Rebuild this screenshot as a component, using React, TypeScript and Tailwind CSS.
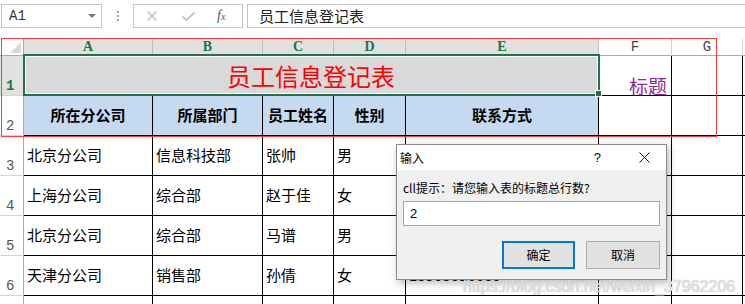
import React from "react";

const HEADS = ["所在分公司", "所属部门", "员工姓名", "性别", "联系方式"];
// E3–E5 sit fully under the dialog, so only E6 is given a value
const DATA = [
  ["北京分公司", "信息科技部", "张帅", "男", ""],
  ["上海分公司", "综合部", "赵于佳", "女", ""],
  ["北京分公司", "综合部", "马谱", "男", ""],
  ["天津分公司", "销售部", "孙倩", "女", "13903016680"],
  ["", "", "", "", ""],
];

function RowHead({ n }: { n?: number }) {
  return (
    <div className="flex items-end border-r border-b border-r-[#ababab] border-b-[#d4d4d4] bg-white pb-[1px] pl-[6px] font-['Liberation_Mono',monospace] text-[14px] leading-[16px] text-[#555]">
      {n}
    </div>
  );
}

function FormulaBar() {
  return (
    <div className="flex h-[39px] items-start pt-[4px]">
      {/* Name box */}
      <div className="ml-px flex h-[24px] w-[101px] items-center justify-between border border-[#c6c6c6] pl-[7px] pr-[5px]">
        <span className="font-['Liberation_Mono',monospace] text-[14px] text-[#333]">A1</span>
        <svg width="8" height="4" viewBox="0 0 8 4">
          <path d="M0 0H8L4 4Z" fill="#777" />
        </svg>
      </div>

      {/* Grip dots */}
      <div className="flex h-[24px] w-[31px] flex-col items-center justify-center gap-[2px]">
        <span className="h-[2px] w-[2px] bg-[#a0a0a0]" />
        <span className="h-[2px] w-[2px] bg-[#a0a0a0]" />
        <span className="h-[2px] w-[2px] bg-[#a0a0a0]" />
      </div>

      {/* Cancel / enter / fx */}
      <div className="flex h-[24px] w-[110px] items-center border border-[#c6c6c6] pl-[13px]">
        <svg width="10" height="10" viewBox="0 0 10 10">
          <path d="M0.5 0.5L9.5 9.5M9.5 0.5L0.5 9.5" stroke="#bdbdbd" strokeWidth="1.3" />
        </svg>
        <svg className="ml-[25px]" width="13" height="9" viewBox="0 0 13 9">
          <path d="M0.5 4.5L4.5 8L12.5 0.5" stroke="#bdbdbd" strokeWidth="1.6" fill="none" />
        </svg>
        <span className="ml-[22px] font-['Liberation_Serif',serif] text-[14px] italic leading-none text-[#555]">
          f<span className="text-[10px]">x</span>
        </span>
      </div>

      {/* Formula input */}
      <div className="ml-[4px] flex h-[24px] flex-1 items-center border-y border-l border-[#c6c6c6] pl-[11px] font-['Noto_Sans_CJK_SC',sans-serif] text-[15px] text-[#222]">
        员工信息登记表
      </div>
    </div>
  );
}

function Sheet() {
  const cjk = "font-['Noto_Sans_CJK_SC',sans-serif]";
  const cell = "border-r border-b border-black";
  return (
    <div className="grid grid-cols-[24px_129px_110px_71px_72px_193px_73px_71px_1fr] grid-rows-[17px_40px_40px_40px_40px_40px_40px_40px]">
      {/* Column headers */}
      <div className="relative border-r border-b border-r-[#ababab] border-b-[#ababab] bg-white">
        <svg className="absolute right-[2px] bottom-[2px]" width="11" height="11" viewBox="0 0 11 11">
          <path d="M11 0V11H0Z" fill="#dadada" />
        </svg>
      </div>
      {["A", "B", "C", "D", "E"].map((c) => (
        <div
          key={c}
          className="flex items-center justify-center border-r border-b border-r-[#c0c0c0] border-b-[#ababab] bg-[#e1e1e1] font-['Liberation_Serif',serif] text-[14px] font-bold leading-none text-[#217346]"
        >
          {c}
        </div>
      ))}
      {["F", "G"].map((c) => (
        <div
          key={c}
          className="flex items-center justify-center border-r border-b border-r-[#d4d4d4] border-b-[#ababab] bg-white font-['Liberation_Mono',monospace] text-[14px] leading-none text-[#444]"
        >
          {c}
        </div>
      ))}
      <div className="border-b border-[#ababab] bg-white" />

      {/* Row 1 */}
      <div className="flex items-end border-r border-b border-r-[#ababab] border-b-[#d4d4d4] bg-[#e1e1e1] pb-[1px] pl-[6px] font-['Liberation_Mono',monospace] text-[14px] font-bold leading-[16px] text-[#217346]">
        1
      </div>
      <div className={`relative col-span-5 flex items-center justify-center bg-[#d9d9d9] ${cell} ${cjk} text-[24px] leading-none text-[#ff0000]`}>
        员工信息登记表
        <div className="pointer-events-none absolute -top-[2px] -left-[1px] -right-[2px] -bottom-px border-2 border-[#217346] shadow-[inset_0_0_0_1px_#fff]" />
        <div className="absolute -right-[4px] -bottom-[2px] h-[7px] w-[7px] border border-white bg-[#217346]" />
      </div>
      <div className={`flex items-end justify-end pr-[4px] ${cell} ${cjk} text-[19px] leading-none text-[#8c2b9a]`}>
        标题
      </div>
      <div className={cell} />
      <div className="border-b border-black" />

      {/* Row 2 */}
      <RowHead n={2} />
      {HEADS.map((h) => (
        <div key={h} className={`flex items-center justify-center bg-[#c5d9f1] ${cell} ${cjk} text-[15px] font-bold text-black`}>
          {h}
        </div>
      ))}
      <div className={cell} />
      <div className={cell} />
      <div className="border-b border-black" />

      {/* Data rows */}
      {DATA.map((r, i) => (
        <React.Fragment key={i}>
          <RowHead n={i < 4 ? i + 3 : undefined} />
          {r.map((v, j) => (
            <div key={j} className={`flex items-center pl-[3px] ${cell} ${cjk} text-[15px] text-black`}>
              {v}
            </div>
          ))}
          <div className={cell} />
          <div className={cell} />
          <div className="border-b border-black" />
        </React.Fragment>
      ))}
    </div>
  );
}

function InputDialog() {
  return (
    <div className="absolute top-[144px] left-[396px] flex h-[136px] w-[271px] flex-col border border-[#8a8a8a] bg-[#f0f0f0] font-['Noto_Sans_CJK_SC',sans-serif] shadow-[2px_3px_8px_rgba(0,0,0,0.28)]">
      <div className="flex h-[25px] items-center bg-white pl-[3px] text-[12px] text-black">
        <span>输入</span>
        <span className="ml-auto font-['Liberation_Sans',sans-serif] text-[13px]">?</span>
        <svg className="mr-[16px] ml-[38px]" width="11" height="11" viewBox="0 0 11 11">
          <path d="M0.5 0.5L10.5 10.5M10.5 0.5L0.5 10.5" stroke="#111" strokeWidth="1" />
        </svg>
      </div>
      <div className="flex flex-col px-[6px]">
        <div className="mt-[10px] text-[12px] leading-[16px] text-black">cll提示：请您输入表的标题总行数?</div>
        <div className="mt-[5px] flex h-[25px] items-center border border-[#a5a5a5] bg-white pl-[6px] font-['Liberation_Sans',sans-serif] text-[13px] text-black">
          2
        </div>
        <div className="mt-[15px] flex justify-end gap-[11px]">
          <button className="h-[28px] w-[73px] border-2 border-[#0078d7] bg-[#e1e1e1] text-[12px] text-black">
            确定
          </button>
          <button className="h-[28px] w-[74px] border border-[#adadad] bg-[#e1e1e1] text-[12px] text-black">
            取消
          </button>
        </div>
      </div>
    </div>
  );
}

export default function App() {
  return (
    <div className="relative h-[304px] w-[745px] overflow-hidden bg-white">
      <FormulaBar />
      <Sheet />

      {/* Red annotation box */}
      <div className="pointer-events-none absolute top-[38px] left-[1px] h-[99px] w-[716px] border border-[#ff3b3b]" />

      <InputDialog />

      {/* Watermark */}
      <div className="pointer-events-none absolute top-[275px] left-[463px] font-['Liberation_Sans',sans-serif] text-[16px] text-[#e6e6e6] [text-shadow:0_0_1px_#9a9a9a]">
        https://blog.csdn.net/weixin_37962206
      </div>
    </div>
  );
}
